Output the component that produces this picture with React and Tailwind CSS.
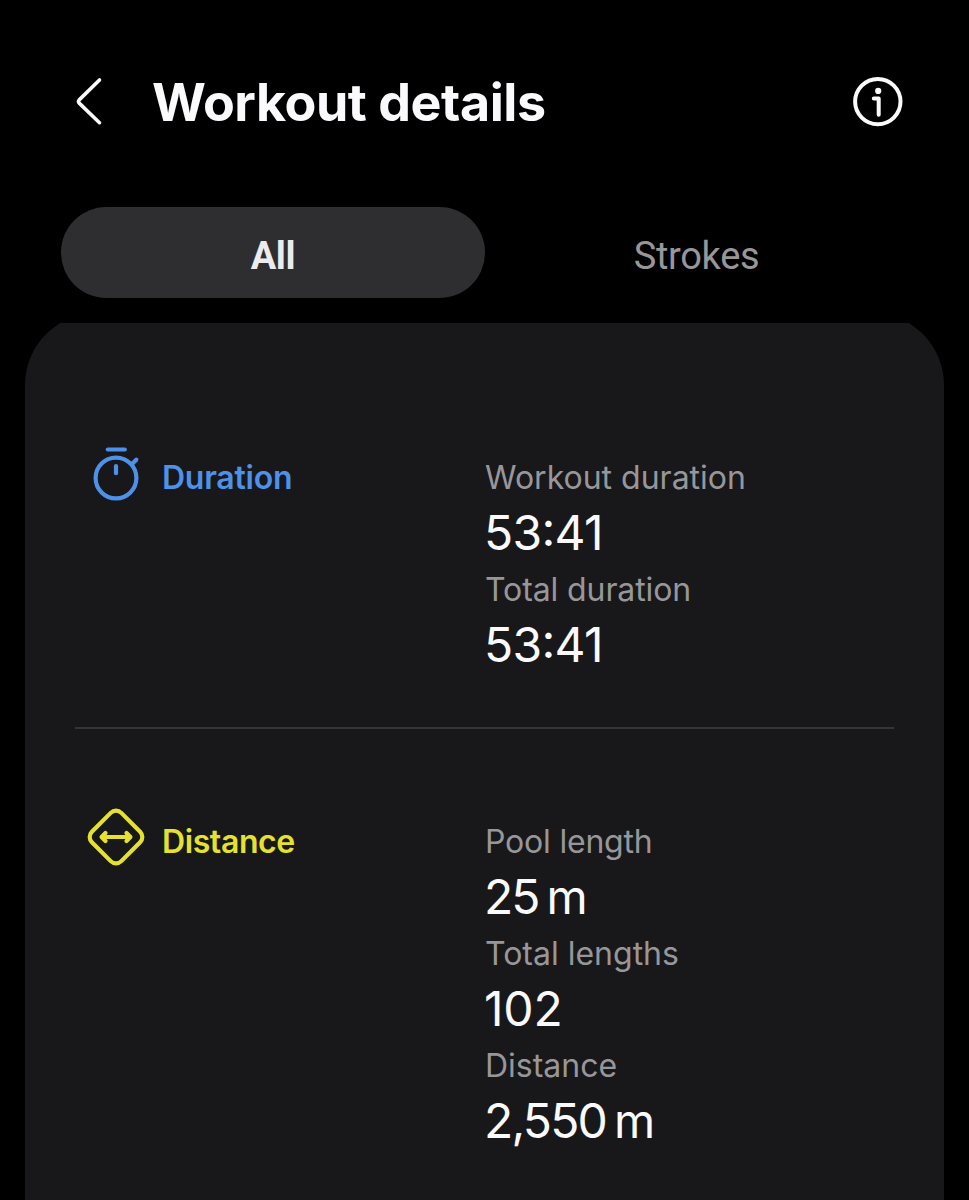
const sections = [
  {
    title: "Duration",
    color: "text-[#4d91e8]",
    tracking: "tracking-[-0.25px]",
    Icon: TimerIcon,
    stats: [
      { label: "Workout duration", value: "53:41", labelTracking: "tracking-[0px]", valueTracking: "tracking-[-0.7px]" },
      { label: "Total duration", value: "53:41", labelTracking: "tracking-[-0.1px]", valueTracking: "tracking-[-0.7px]" },
    ],
  },
  {
    title: "Distance",
    color: "text-[#e5e22f]",
    tracking: "tracking-[-0.4px]",
    Icon: DistanceIcon,
    stats: [
      { label: "Pool length", value: "25", unit: "m", labelTracking: "tracking-[-0.2px]", valueTracking: "tracking-[-2px]" },
      { label: "Total lengths", value: "102", labelTracking: "tracking-[0px]", valueTracking: "tracking-[-0.2px]" },
      { label: "Distance", value: "2,550", unit: "m", labelTracking: "tracking-[0px]", valueTracking: "tracking-[-1.8px]" },
    ],
  },
];

function BackIcon() {
  return (
    <svg width="30" height="52" viewBox="0 0 30 52" fill="none" stroke="currentColor" strokeWidth="3.6" strokeLinecap="round" strokeLinejoin="round">
      <path d="M25.5 4 5.2 23.9Q3.8 25.5 5.2 27.1L25.5 46.7" />
    </svg>
  );
}

function InfoIcon() {
  return (
    <svg width="52" height="52" viewBox="0 0 52 52" fill="none" stroke="currentColor" strokeLinecap="round" strokeLinejoin="round">
      <circle cx="25.8" cy="25.6" r="22.7" strokeWidth="4" />
      <circle cx="26.2" cy="14.9" r="3.1" fill="currentColor" stroke="none" />
      <path d="M21.8 22.6h4.9v16.2" strokeWidth="4" />
    </svg>
  );
}

function TimerIcon() {
  return (
    <svg width="60" height="60" viewBox="0 0 60 60" fill="none" stroke="currentColor" strokeWidth="4.2" strokeLinecap="round">
      <circle cx="30" cy="35" r="20.4" />
      <path d="M21.8 6.5h17" />
      <path d="M30 23.2v7" />
      <path d="M46.5 20.5l3.8-3.8" />
    </svg>
  );
}

function DistanceIcon() {
  return (
    <svg width="60" height="60" viewBox="0 0 60 60" fill="none" stroke="currentColor" strokeWidth="4.2" strokeLinecap="round" strokeLinejoin="round">
      <rect x="9.2" y="9.2" width="41.6" height="41.6" rx="7.5" transform="rotate(45 30 30)" />
      <path d="M16 30h28" />
      <path d="M19.5 26 15.6 30l3.9 4M40.5 26l3.9 4-3.9 4" />
    </svg>
  );
}

// the colon in a time sits centred on the digits
function Value({ value, tracking }) {
  const [head, tail] = value.split(":");
  return (
    <span className={tracking}>
      {head}
      {tail && <span className="inline-block -translate-y-[4px]">:</span>}
      {tail}
    </span>
  );
}

function Stat({ label, value, unit, labelTracking, valueTracking }) {
  return (
    <div className="h-[112px]">
      <dt className={`text-[32px] leading-[56px] text-[#97979a] ${labelTracking}`}>{label}</dt>
      <dd className="-mt-px -ml-px flex gap-[8px] text-[48px] leading-[56px] text-[#fafafc]">
        <Value value={value} tracking={valueTracking} />
        {unit && <span className="text-[47px]">{unit}</span>}
      </dd>
    </div>
  );
}

function Section({ title, color, tracking, Icon, stats }) {
  return (
    <section className="flex">
      <div className={`flex h-[56px] w-[399px] items-center gap-4 ${color}`}>
        <div className="-mt-[11px]">
          <Icon />
        </div>
        <h2 className={`text-[32px] font-semibold ${tracking}`}>{title}</h2>
      </div>
      <dl>
        {stats.map((stat) => (
          <Stat key={stat.label} {...stat} />
        ))}
      </dl>
    </section>
  );
}

function App() {
  return (
    <div className="flex h-[1200px] w-[969px] flex-col overflow-hidden bg-black font-['Inter',sans-serif] whitespace-nowrap">
      <header className="flex h-[207px] items-start pt-[76px] pr-[65px] pl-[74px] text-[#fafafc]">
        <button aria-label="Back">
          <BackIcon />
        </button>
        <h1 className="ml-[48px] text-[52px] leading-[54px] font-bold tracking-[-0.45px]">Workout details</h1>
        <button aria-label="Info" className="ml-auto">
          <InfoIcon />
        </button>
      </header>

      <nav className="flex h-[91px] shrink-0 px-[61px] font-['Roboto',sans-serif] text-[38px]">
        <button className="h-[91px] w-[424px] rounded-full bg-[#2e2e30] pt-[7px] font-bold tracking-[-0.3px] text-[#ececee]">
          All
        </button>
        <button className="h-[91px] w-[423px] pt-[7px] tracking-[-0.3px] text-[#97979a]">Strokes</button>
      </nav>

      <main className="mx-[25px] mt-[25px] flex flex-1 flex-col overflow-hidden">
        <div className="-mt-[10px] flex-1 rounded-t-[72px] bg-[#18181a] px-[50px] pt-[137px]">
          <div className="pl-[11px]">
            <Section {...sections[0]} />
          </div>
          <hr className="mt-[53px] mb-[85px] border-t-2 border-[#353537]" />
          <div className="pl-[11px]">
            <Section {...sections[1]} />
          </div>
        </div>
      </main>
    </div>
  );
}

export default App;
